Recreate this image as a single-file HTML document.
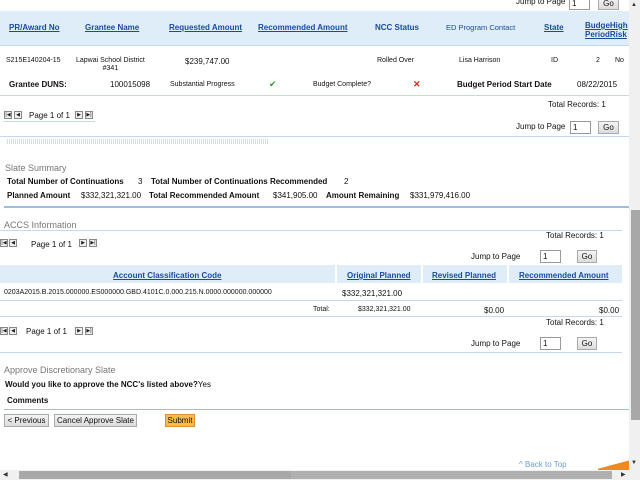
<!DOCTYPE html>
<html><head><style>
body{margin:0;width:640px;height:480px;overflow:hidden;background:#fff;position:relative;font-family:"Liberation Sans",Verdana,sans-serif;font-size:8px;color:#111}
.a{position:absolute;white-space:nowrap}
.h{color:#1b4a9c;font-weight:bold;text-decoration:underline;font-size:8px}
.hn{color:#1b4a9c;font-weight:bold;font-size:8px}
.b{font-weight:bold;font-size:8px}
.line{position:absolute;height:1px;background:#c5d9ee}
.inp{position:absolute;border:1px solid #999;background:#fff;font-size:8px;line-height:11px;padding-left:2px;box-sizing:border-box;width:21px;height:13px}
.btn{position:absolute;height:13px;border:1px solid #aaa;background:linear-gradient(#f4f4f4,#dcdcdc);font-size:8px;line-height:12px;text-align:center;box-sizing:border-box}
.pi{position:absolute;width:8px;height:8px;border:1px solid #888;background:#eee;box-sizing:border-box;font-size:5px;line-height:6px;text-align:center;color:#222}
.gray{color:#777;font-size:9px}
</style></head><body>
<div class="a" style="left:516px;top:-3px">Jump to Page</div>
<div class="inp" style="left:569px;top:-3px">1</div>
<div class="btn" style="left:598px;top:-3px;width:21px">Go</div>

<div style="position:absolute;left:0;top:11px;width:629px;height:34px;background:#deedf7;border-bottom:1px solid #c5d9ee"></div>
<div class="a h" style="left:9px;top:23px">PR/Award No</div>
<div class="a h" style="left:85px;top:23px">Grantee Name</div>
<div class="a h" style="left:169px;top:23px">Requested Amount</div>
<div class="a h" style="left:258px;top:23px">Recommended Amount</div>
<div class="a hn" style="left:375px;top:23px">NCC Status</div>
<div class="a" style="left:446px;top:23px;color:#1b4a9c;font-size:7.5px">ED Program Contact</div>
<div class="a h" style="left:544px;top:23px">State</div>
<div class="a h" style="left:585px;top:21px;line-height:9px">BudgeHigh<br>PeriodRisk</div>

<div class="a" style="left:6px;top:57px;font-size:7px">S215E140204-15</div>
<div class="a" style="left:76px;top:57px;font-size:7px;text-align:center;line-height:8px">Lapwai School District<br>#341</div>
<div class="a" style="left:185px;top:57px">$239,747.00</div>
<div class="a" style="left:377px;top:57px;font-size:7px">Rolled Over</div>
<div class="a" style="left:459px;top:57px;font-size:7px">Lisa Harrison</div>
<div class="a" style="left:551px;top:57px;font-size:7px">ID</div>
<div class="a" style="left:596px;top:57px;font-size:7px">2</div>
<div class="a" style="left:615px;top:57px;font-size:7px">No</div>

<div class="a b" style="left:9px;top:80px">Grantee DUNS:</div>
<div class="a" style="left:110px;top:80px">100015098</div>
<div class="a" style="left:170px;top:81px;font-size:7px">Substantial Progress</div>
<div class="a" style="left:269px;top:79px;color:#2a9a2a;font-size:9px">✔</div>
<div class="a" style="left:313px;top:81px;font-size:7px">Budget Complete?</div>
<div class="a" style="left:413px;top:79px;color:#e0201a;font-size:9px;font-weight:bold">✕</div>
<div class="a b" style="left:457px;top:80px">Budget Period Start Date</div>
<div class="a" style="left:577px;top:80px">08/22/2015</div>
<div class="line" style="left:0;top:95px;width:629px"></div>

<div class="a" style="left:548px;top:100px">Total Records: 1</div>
<div class="pi" style="left:4px;top:111px">|◀</div><div class="pi" style="left:14px;top:111px">◀</div>
<div class="a" style="left:29px;top:111px">Page 1 of 1</div>
<div class="pi" style="left:75px;top:111px">▶</div><div class="pi" style="left:85px;top:111px">▶|</div>
<div class="line" style="left:3px;top:121px;width:92px"></div>
<div class="a" style="left:516px;top:122px">Jump to Page</div>
<div class="inp" style="left:570px;top:121px">1</div>
<div class="btn" style="left:598px;top:121px;width:21px">Go</div>
<div class="line" style="left:0;top:136px;width:629px"></div>
<div style="position:absolute;left:7px;top:139px;width:261px;height:5px;background:repeating-linear-gradient(90deg,#ddd 0 1px,transparent 1px 2px)"></div>

<div class="a gray" style="left:5px;top:163px">Slate Summary</div>
<div class="a b" style="left:7px;top:177px">Total Number of Continuations</div>
<div class="a" style="left:138px;top:177px">3</div>
<div class="a b" style="left:151px;top:177px">Total Number of Continuations Recommended</div>
<div class="a" style="left:344px;top:177px">2</div>
<div class="a b" style="left:7px;top:191px">Planned Amount</div>
<div class="a" style="left:81px;top:191px">$332,321,321.00</div>
<div class="a b" style="left:149px;top:191px">Total Recommended Amount</div>
<div class="a" style="left:273px;top:191px">$341,905.00</div>
<div class="a b" style="left:326px;top:191px">Amount Remaining</div>
<div class="a" style="left:410px;top:191px">$331,979,416.00</div>
<div class="line" style="left:4px;top:206px;width:625px;height:2px;background:#9bbfe3"></div>

<div class="a gray" style="left:4px;top:220px">ACCS Information</div>
<div class="line" style="left:0;top:230px;width:622px"></div>
<div class="a" style="left:546px;top:231px">Total Records: 1</div>
<div class="pi" style="left:0px;top:239px">|◀</div><div class="pi" style="left:9px;top:239px">◀</div>
<div class="a" style="left:31px;top:240px">Page 1 of 1</div>
<div class="pi" style="left:79px;top:239px">▶</div><div class="pi" style="left:89px;top:239px">▶|</div>
<div class="a" style="left:471px;top:252px">Jump to Page</div>
<div class="inp" style="left:540px;top:250px">1</div>
<div class="btn" style="left:577px;top:250px;width:20px">Go</div>

<div style="position:absolute;left:0;top:265px;width:335px;height:18px;background:#deedf7"></div>
<div style="position:absolute;left:337px;top:265px;width:84px;height:18px;background:#deedf7"></div>
<div style="position:absolute;left:423px;top:265px;width:84px;height:18px;background:#deedf7"></div>
<div style="position:absolute;left:509px;top:265px;width:113px;height:18px;background:#deedf7"></div>
<div class="a h" style="left:113px;top:271px">Account Classification Code</div>
<div class="a h" style="left:347px;top:271px">Original Planned</div>
<div class="a h" style="left:432px;top:271px">Revised Planned</div>
<div class="a h" style="left:519px;top:271px">Recommended Amount</div>
<div class="a" style="left:4px;top:289px;font-size:7px">0203A2015.B.2015.000000.ES000000.GBD.4101C.0.000.215.N.0000.000000.000000</div>
<div class="a" style="left:342px;top:289px">$332,321,321.00</div>
<div class="line" style="left:0;top:300px;width:622px"></div>
<div class="a" style="left:313px;top:306px;font-size:7px">Total:</div>
<div class="a" style="left:358px;top:306px;font-size:7px">$332,321,321.00</div>
<div class="a" style="left:484px;top:306px">$0.00</div>
<div class="a" style="left:599px;top:306px">$0.00</div>
<div class="line" style="left:0;top:316px;width:622px"></div>
<div class="a" style="left:546px;top:318px">Total Records: 1</div>
<div class="pi" style="left:0px;top:327px">|◀</div><div class="pi" style="left:9px;top:327px">◀</div>
<div class="a" style="left:26px;top:327px">Page 1 of 1</div>
<div class="pi" style="left:75px;top:327px">▶</div><div class="pi" style="left:85px;top:327px">▶|</div>
<div class="a" style="left:471px;top:339px">Jump to Page</div>
<div class="inp" style="left:540px;top:337px">1</div>
<div class="btn" style="left:577px;top:337px;width:20px">Go</div>
<div class="line" style="left:0;top:352px;width:622px"></div>

<div class="a gray" style="left:4px;top:365px">Approve Discretionary Slate</div>
<div class="a b" style="left:5px;top:380px">Would you like to approve the NCC's listed above?<span style="font-weight:normal">Yes</span></div>
<div class="a b" style="left:7px;top:396px">Comments</div>
<div class="line" style="left:4px;top:409px;width:625px;background:#9bbfe3"></div>
<div class="btn" style="left:4px;top:414px;width:45px">&lt; Previous</div>
<div class="btn" style="left:54px;top:414px;width:83px">Cancel Approve Slate</div>
<div class="btn" style="left:165px;top:414px;width:30px;background:#f8b94f;border-color:#d8902a">Submit</div>

<div class="a" style="left:519px;top:460px;color:#6a9fd8">^ Back to Top</div>
<div style="position:absolute;left:598px;top:459px;width:31px;height:11px;background:linear-gradient(165deg,transparent 50%,#f08a20 51%)"></div>

<div style="position:absolute;left:629px;top:0;width:11px;height:480px;background:#f0f0f0"></div>
<div style="position:absolute;left:631px;top:210px;width:9px;height:210px;background:#a8a8a8"></div>
<div class="a" style="left:631px;top:2px;font-size:6px;color:#333">▲</div>
<div class="a" style="left:631px;top:460px;font-size:6px;color:#333">▼</div>
<div style="position:absolute;left:0;top:470px;width:629px;height:10px;background:#f0f0f0"></div>
<div style="position:absolute;left:19px;top:471px;width:272px;height:8px;background:#a8a8a8"></div>
<div style="position:absolute;left:291px;top:471px;width:321px;height:8px;background:#b0b0b0"></div>
<div class="a" style="left:3px;top:471px;font-size:6px;color:#333">◀</div>
<div class="a" style="left:621px;top:471px;font-size:6px;color:#333">▶</div>
</body></html>
